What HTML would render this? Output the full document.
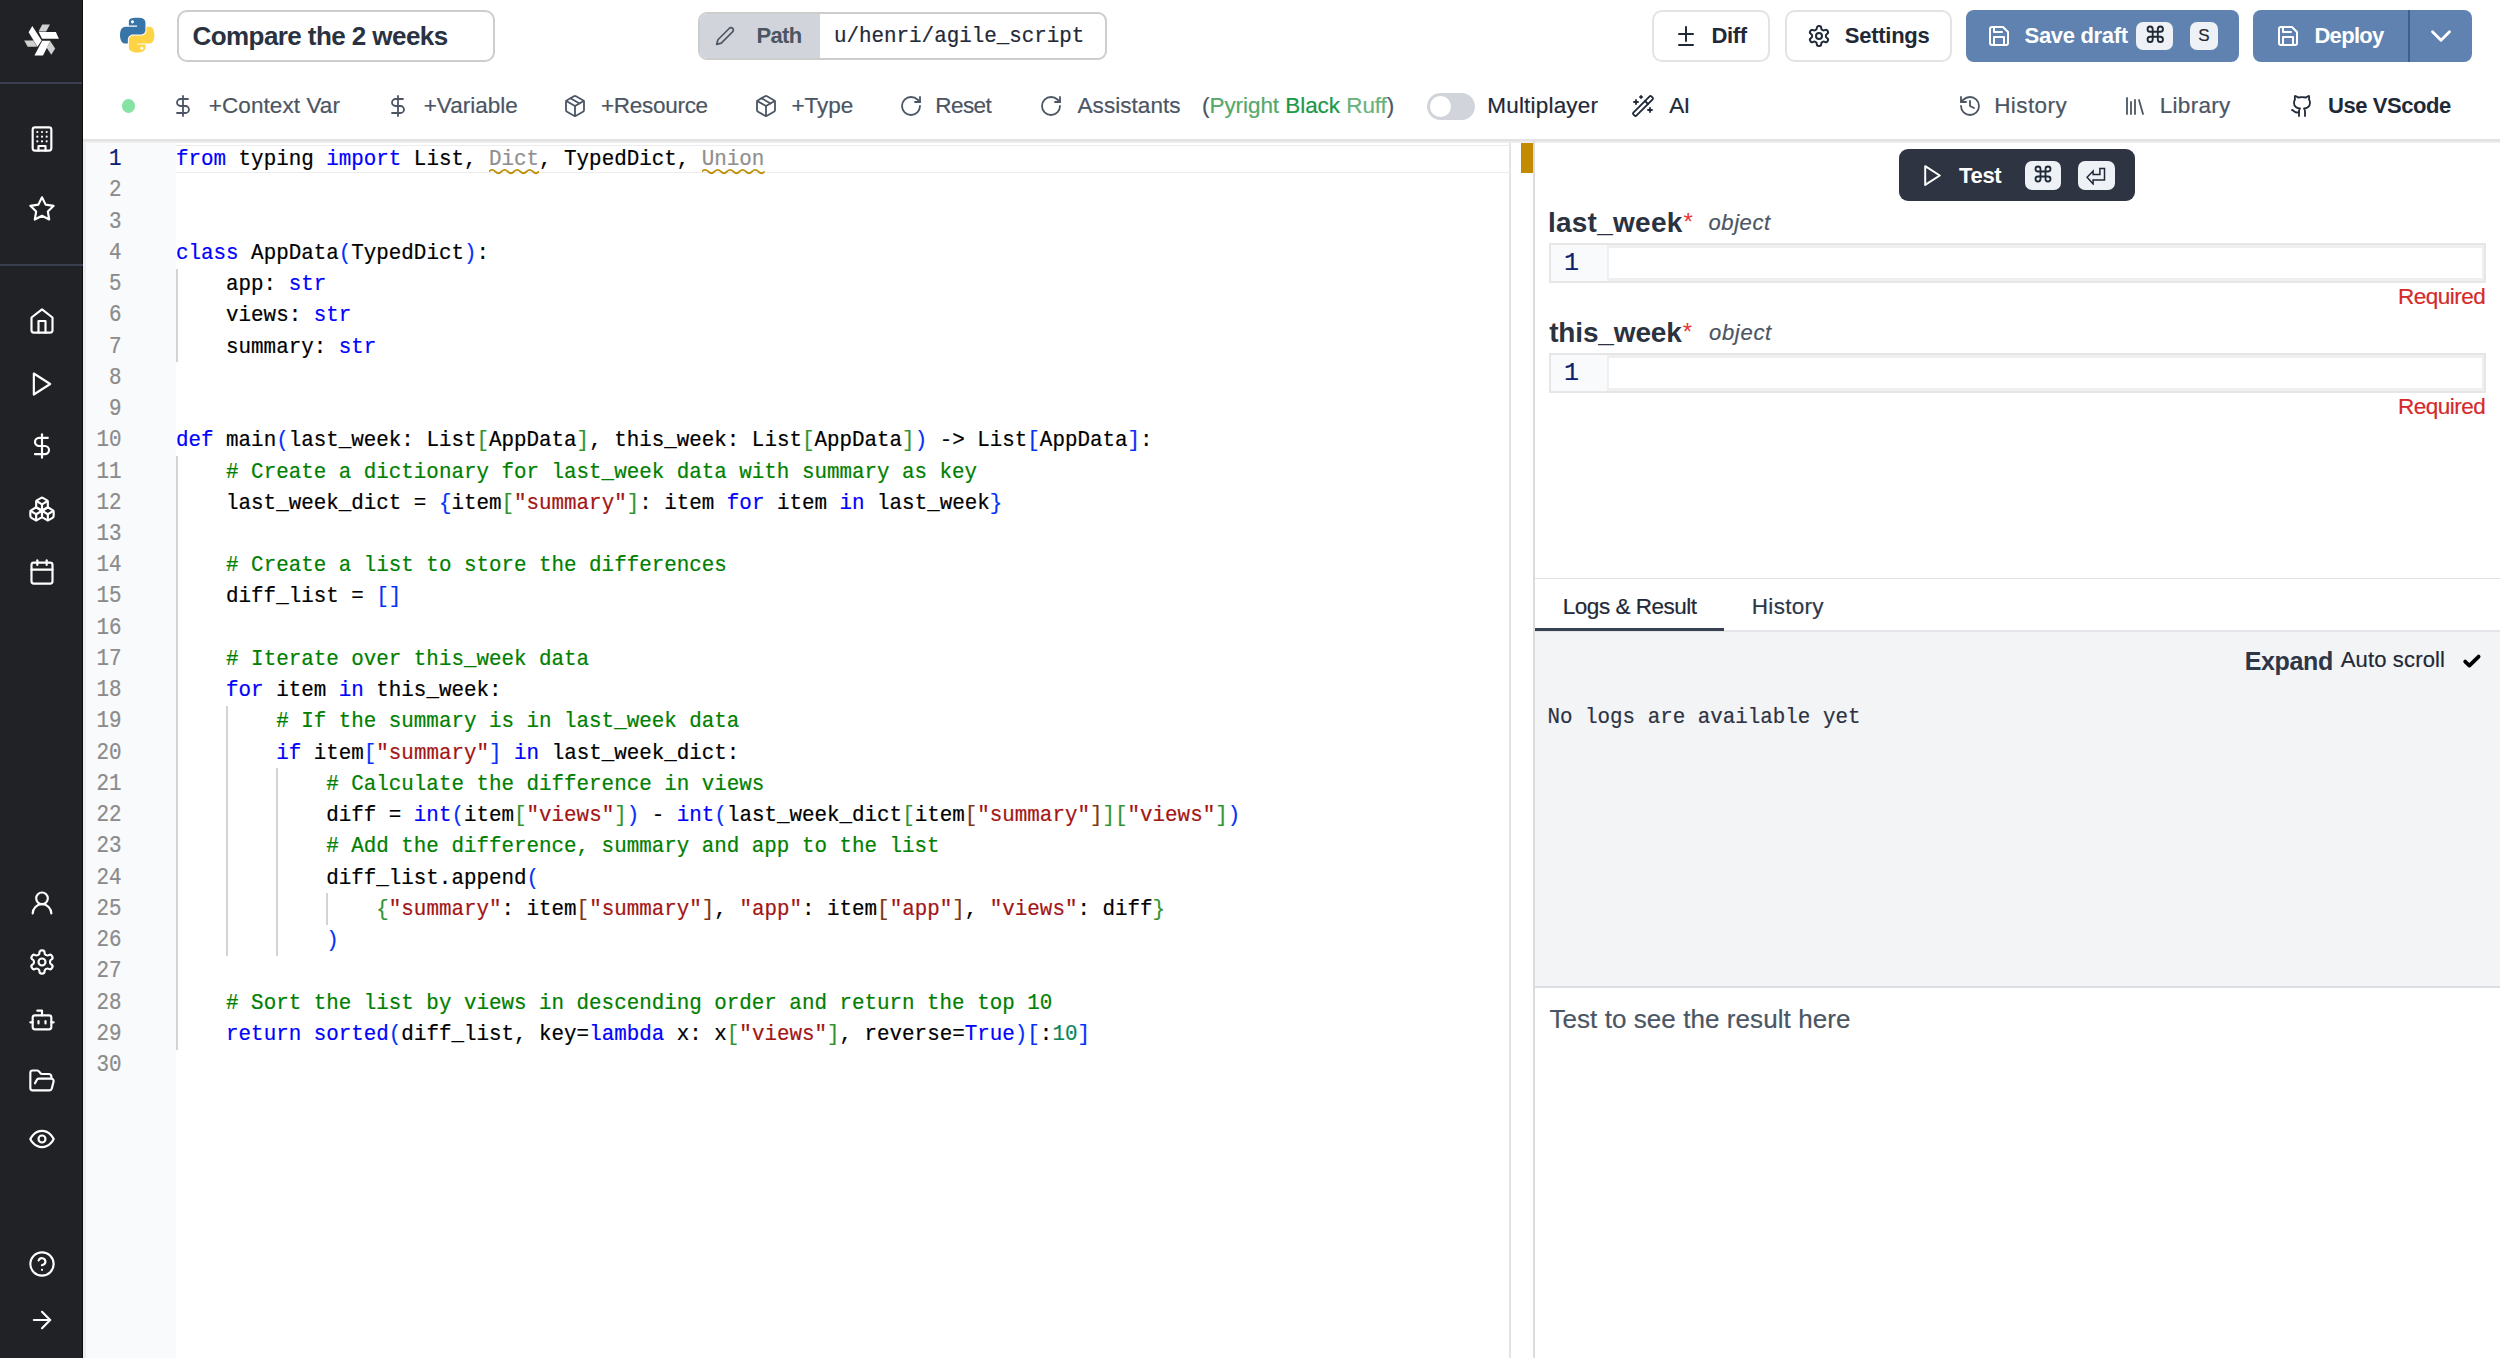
<!DOCTYPE html>
<html><head><meta charset="utf-8">
<style>
html,body{margin:0;padding:0;width:2500px;height:1358px;overflow:hidden;background:#fff;position:relative;font-family:"Liberation Sans",sans-serif;}
.a{position:absolute;}
.t,#code,#nums{-webkit-text-stroke:0.2px currentColor;}
.nb{-webkit-text-stroke:0 !important;}
.t{position:absolute;line-height:0;white-space:nowrap;}
svg.i{position:absolute;fill:none;stroke-linecap:round;stroke-linejoin:round;}
#side{left:0;top:0;width:83px;height:1358px;background:#202226;}
.sdiv{position:absolute;left:0;width:83px;height:2px;background:#3b3e4e;}
#side svg.i{stroke:#fff;stroke-width:1.85;width:28px;height:28px;}

.bx{position:absolute;box-sizing:border-box;}
svg.ti{stroke:#4b5563;stroke-width:1.8;width:24px;height:24px;}
.tb{font-size:22px;color:#4b5563;}
.btn{font-size:21px;font-weight:700;color:#1f2937;}
.kbd{position:absolute;box-sizing:border-box;background:#eef1f5;border-radius:7px;}

#code,#nums{font-family:"Liberation Mono",monospace;font-size:20.87px;line-height:31.24px;color:#000;}
.cl{white-space:pre;height:31.24px;transform:scaleY(1.07);transform-origin:0 21.17px}.ln{height:31.24px;transform:scaleY(1.18);transform-origin:0 21.17px}
#nums .ln{text-align:right;color:#8b8b8b;}
.k{color:#0000ff}.c{color:#008000}.s{color:#a31515}.n{color:#098658}.b1{color:#0431fa}.b2{color:#319331}.b3{color:#7b3814}.u{color:#8f8f8f}
</style></head><body>

<!-- SIDEBAR -->
<div id="side" class="a">
  <svg class="a" style="left:15px;top:15px;width:50px;height:50px" viewBox="0 0 1358 1358">
    <polygon fill="#d0d0d0" points="250,690 500,690 600,862 345,862"/>
    <polygon fill="#fff" points="370,470 470,300 722,690 610,862"/>
    <polygon fill="#d0d0d0" points="740,255 950,255 845,450 640,450"/>
    <polygon fill="#fff" points="645,462 1110,462 1192,642 735,642"/>
    <polygon fill="#d0d0d0" points="862,888 962,712 1092,910 985,1082"/>
    <polygon fill="#fff" points="528,1102 740,700 962,700 760,1102"/>
  </svg>
  <div class="sdiv" style="top:82px"></div>
  <div class="a" style="left:82px;top:0;width:1px;height:1358px;background:#0d0e10"></div>
  <div class="sdiv" style="top:264px"></div>
  <svg class="i" style="left:27.5px;top:125.10px" viewBox="0 0 24 24"><rect width="16" height="20" x="4" y="2" rx="2" ry="2"/><path d="M9 22v-4h6v4"/><path d="M8 6h.01"/><path d="M16 6h.01"/><path d="M12 6h.01"/><path d="M12 10h.01"/><path d="M12 14h.01"/><path d="M16 10h.01"/><path d="M16 14h.01"/><path d="M8 10h.01"/><path d="M8 14h.01"/></svg>
  <svg class="i" style="left:27.5px;top:194.60px" viewBox="0 0 24 24"><polygon points="12 2 15.09 8.26 22 9.27 17 14.14 18.18 21.02 12 17.77 5.82 21.02 7 14.14 2 9.27 8.91 8.26 12 2"/></svg>
  <svg class="i" style="left:27.5px;top:307.05px" viewBox="0 0 24 24"><path d="m3 9 9-7 9 7v11a2 2 0 0 1-2 2H5a2 2 0 0 1-2-2z"/><polyline points="9 22 9 12 15 12 15 22"/></svg>
  <svg class="i" style="left:27.5px;top:370.00px" viewBox="0 0 24 24"><polygon points="5 3 19 12 5 21 5 3"/></svg>
  <svg class="i" style="left:27.5px;top:432.00px" viewBox="0 0 24 24"><line x1="12" x2="12" y1="2" y2="22"/><path d="M17 5H9.5a3.5 3.5 0 0 0 0 7h5a3.5 3.5 0 0 1 0 7H6"/></svg>
  <svg class="i" style="left:27.5px;top:495.00px" viewBox="0 0 24 24"><path d="M2.97 12.92A2 2 0 0 0 2 14.63v3.24a2 2 0 0 0 .97 1.71l3 1.8a2 2 0 0 0 2.06 0L12 19v-5.5l-5-3-4.03 2.42Z"/><path d="m7 16.5-4.74-2.85"/><path d="m7 16.5 5-3"/><path d="M7 16.5v5.17"/><path d="M12 13.5V19l3.97 2.38a2 2 0 0 0 2.06 0l3-1.8a2 2 0 0 0 .97-1.71v-3.24a2 2 0 0 0-.97-1.71L17 10.5l-5 3Z"/><path d="m17 16.5-5-3"/><path d="m17 16.5 4.74-2.85"/><path d="M17 16.5v5.17"/><path d="M7.97 4.42A2 2 0 0 0 7 6.13v4.37l5 3 5-3V6.13a2 2 0 0 0-.97-1.71l-3-1.8a2 2 0 0 0-2.06 0l-3 1.8Z"/><path d="M12 8 7.26 5.15"/><path d="m12 8 4.74-2.85"/><path d="M12 13.5V8"/></svg>
  <svg class="i" style="left:27.5px;top:557.60px" viewBox="0 0 24 24"><rect width="18" height="18" x="3" y="4" rx="2" ry="2"/><line x1="16" x2="16" y1="2" y2="6"/><line x1="8" x2="8" y1="2" y2="6"/><line x1="3" x2="21" y1="10" y2="10"/></svg>
  <svg class="i" style="left:27.5px;top:889.00px" viewBox="0 0 24 24"><circle cx="12" cy="8" r="5"/><path d="M20 21a8 8 0 0 0-16 0"/></svg>
  <svg class="i" style="left:27.5px;top:948.30px" viewBox="0 0 24 24"><path d="M12.22 2h-.44a2 2 0 0 0-2 2v.18a2 2 0 0 1-1 1.73l-.43.25a2 2 0 0 1-2 0l-.15-.08a2 2 0 0 0-2.73.73l-.22.38a2 2 0 0 0 .73 2.73l.15.1a2 2 0 0 1 1 1.72v.51a2 2 0 0 1-1 1.74l-.15.09a2 2 0 0 0-.73 2.73l.22.38a2 2 0 0 0 2.73.73l.15-.08a2 2 0 0 1 2 0l.43.25a2 2 0 0 1 1 1.73V20a2 2 0 0 0 2 2h.44a2 2 0 0 0 2-2v-.18a2 2 0 0 1 1-1.73l.43-.25a2 2 0 0 1 2 0l.15.08a2 2 0 0 0 2.73-.73l.22-.39a2 2 0 0 0-.73-2.73l-.15-.08a2 2 0 0 1-1-1.74v-.5a2 2 0 0 1 1-1.74l.15-.09a2 2 0 0 0 .73-2.73l-.22-.38a2 2 0 0 0-2.73-.73l-.15.08a2 2 0 0 1-2 0l-.43-.25a2 2 0 0 1-1-1.73V4a2 2 0 0 0-2-2z"/><circle cx="12" cy="12" r="3"/></svg>
  <svg class="i" style="left:27.5px;top:1006.40px" viewBox="0 0 24 24"><path d="M12 8V4H8"/><rect width="16" height="12" x="4" y="8" rx="2"/><path d="M2 14h2"/><path d="M20 14h2"/><path d="M15 13v2"/><path d="M9 13v2"/></svg>
  <svg class="i" style="left:27.5px;top:1067.00px" viewBox="0 0 24 24"><path d="m6 14 1.5-2.9A2 2 0 0 1 9.24 10H20a2 2 0 0 1 1.94 2.5l-1.54 6a2 2 0 0 1-1.95 1.5H4a2 2 0 0 1-2-2V5a2 2 0 0 1 2-2h3.9a2 2 0 0 1 1.69.9l.81 1.2a2 2 0 0 0 1.67.9H18a2 2 0 0 1 2 2v2"/></svg>
  <svg class="i" style="left:27.5px;top:1125.20px" viewBox="0 0 24 24"><path d="M2 12s3-7 10-7 10 7 10 7-3 7-10 7-10-7-10-7Z"/><circle cx="12" cy="12" r="3"/></svg>
  <svg class="i" style="left:27.5px;top:1250.00px" viewBox="0 0 24 24"><circle cx="12" cy="12" r="10"/><path d="M9.09 9a3 3 0 0 1 5.83 1c0 2-3 3-3 3"/><path d="M12 17h.01"/></svg>
  <svg class="i" style="left:27.5px;top:1306.00px" viewBox="0 0 24 24"><path d="M5 12h14"/><path d="m12 5 7 7-7 7"/></svg>
</div>


<!-- HEADER -->
<svg class="a" style="left:119px;top:17px;width:36px;height:36px" viewBox="0 0 110 110">
  <path fill="#3775a9" d="M54.9 2.2c-4.3 0-8.5.4-12.1 1-10.7 1.9-12.7 5.9-12.7 13.3v9.7h25.3v3.3H20.6c-7.4 0-13.8 4.4-15.8 12.8-2.3 9.6-2.4 15.6 0 25.6 1.8 7.5 6.1 12.8 13.5 12.8h8.7V69c0-8.4 7.2-15.8 15.8-15.8h25.3c7 0 12.7-5.8 12.7-12.8V16.4c0-6.8-5.8-11.9-12.7-13.1-4.3-.7-8.8-1.1-13.2-1.1zM41.2 10c2.6 0 4.8 2.2 4.8 4.8 0 2.6-2.1 4.8-4.8 4.8-2.6 0-4.8-2.1-4.8-4.8 0-2.6 2.1-4.8 4.8-4.8z"/>
  <path fill="#ffd343" d="M83.9 29.5v11.3c0 8.8-7.4 16.1-15.8 16.1H42.8c-6.9 0-12.7 5.9-12.7 12.8v24.1c0 6.9 6 10.9 12.7 12.9 8 2.4 15.7 2.8 25.3 0 6.4-1.8 12.7-5.5 12.7-12.9v-9.7H55.5v-3.2h38c7.4 0 10.1-5.1 12.7-12.8 2.7-7.9 2.5-15.5 0-25.6-1.8-7.3-5.3-12.8-12.7-12.8h-9.6zM69.7 90.6c2.6 0 4.8 2.1 4.8 4.8 0 2.6-2.1 4.8-4.8 4.8-2.6 0-4.8-2.2-4.8-4.8.1-2.7 2.2-4.8 4.8-4.8z"/>
</svg>
<div class="bx" style="left:177px;top:10px;width:318px;height:51.5px;border:2px solid #cdcdcd;border-radius:10px;"></div>
<div id="title" class="nb t" style="left:192.5px;top:35.5px;font-size:26px;font-weight:700;letter-spacing:-0.57px;color:#2a3242;">Compare the 2 weeks</div>

<div class="bx" style="left:698px;top:11.5px;width:408.5px;height:48.5px;border:2px solid #cdcdcd;border-radius:9px;overflow:hidden;"><div class="a" style="left:0;top:0;width:120px;height:100%;background:#d1d5db;"></div></div>
<svg class="i" style="left:715px;top:25.7px;width:20px;height:20px;stroke:#4b5563;stroke-width:2" viewBox="0 0 24 24"><path d="M17 3a2.85 2.83 0 1 1 4 4L7.5 20.5 2 22l1.5-5.5Z"/></svg>
<div id="path" class="nb t" style="left:756.5px;top:35.8px;font-size:22px;font-weight:700;letter-spacing:-0.7px;color:#4b5563;">Path</div>
<div id="pathtxt" class="t" style="left:834px;top:37.2px;transform:scaleY(1.08);transform-origin:0 5.55px;font-size:20.87px;font-family:'Liberation Mono',monospace;color:#1f2937;">u/henri/agile_script</div>

<div class="bx" style="left:1651.5px;top:10px;width:118.5px;height:51.5px;border:2px solid #e3e3e3;border-radius:10px;"></div>
<svg class="i" style="left:1673.8px;top:23.8px;width:24px;height:24px;stroke:#1f2937;stroke-width:2" viewBox="0 0 24 24"><path d="M12 3v14"/><path d="M5 10h14"/><path d="M5 21h14"/></svg>
<div id="diff" class="nb t btn" style="left:1711.6px;top:35.8px;font-size:22px;font-weight:700;letter-spacing:-0.37px;">Diff</div>
<div class="bx" style="left:1785px;top:10px;width:166.5px;height:51.5px;border:2px solid #e3e3e3;border-radius:10px;"></div>
<svg class="i" style="left:1807.2px;top:23.7px;width:24px;height:24px;stroke:#1f2937;stroke-width:2" viewBox="0 0 24 24"><path d="M12.22 2h-.44a2 2 0 0 0-2 2v.18a2 2 0 0 1-1 1.73l-.43.25a2 2 0 0 1-2 0l-.15-.08a2 2 0 0 0-2.73.73l-.22.38a2 2 0 0 0 .73 2.73l.15.1a2 2 0 0 1 1 1.72v.51a2 2 0 0 1-1 1.74l-.15.09a2 2 0 0 0-.73 2.73l.22.38a2 2 0 0 0 2.73.73l.15-.08a2 2 0 0 1 2 0l.43.25a2 2 0 0 1 1 1.73V20a2 2 0 0 0 2 2h.44a2 2 0 0 0 2-2v-.18a2 2 0 0 1 1-1.73l.43-.25a2 2 0 0 1 2 0l.15.08a2 2 0 0 0 2.73-.73l.22-.39a2 2 0 0 0-.73-2.73l-.15-.08a2 2 0 0 1-1-1.74v-.5a2 2 0 0 1 1-1.74l.15-.09a2 2 0 0 0 .73-2.73l-.22-.38a2 2 0 0 0-2.73-.73l-.15.08a2 2 0 0 1-2 0l-.43-.25a2 2 0 0 1-1-1.73V4a2 2 0 0 0-2-2z"/><circle cx="12" cy="12" r="3"/></svg>
<div id="settings" class="nb t btn" style="left:1844.8px;top:35.8px;font-size:22px;font-weight:700;letter-spacing:-0.26px;">Settings</div>

<div class="bx" style="left:1966px;top:10px;width:273px;height:52px;background:#5f82b0;border-radius:8px;"></div>
<svg class="i" style="left:1987px;top:23.9px;width:24px;height:24px;stroke:#fff;stroke-width:2" viewBox="0 0 24 24"><path d="M19 21H5a2 2 0 0 1-2-2V5a2 2 0 0 1 2-2h11l5 5v11a2 2 0 0 1-2 2z"/><polyline points="17 21 17 13 7 13 7 21"/><polyline points="7 3 7 8 15 8"/></svg>
<div id="save" class="nb t btn" style="left:2024.6px;top:36.0px;font-size:22px;font-weight:700;letter-spacing:-0.33px;color:#fff;">Save draft</div>
<div class="kbd" style="left:2136px;top:22px;width:36.5px;height:28px;"></div>
<svg class="i" style="left:2144.6px;top:23.6px;width:20.5px;height:20.5px;stroke:#1f2937;stroke-width:2.2" viewBox="0 0 24 24"><path d="M15 6v12a3 3 0 1 0 3-3H6a3 3 0 1 0 3 3V6a3 3 0 1 0-3 3h12a3 3 0 1 0-3-3"/></svg>
<div class="kbd" style="left:2190px;top:22px;width:28px;height:28px;"></div>
<div id="kbds" class="t" style="left:2198.3px;top:36.2px;font-size:17px;color:#1f2937;">S</div>

<div class="bx" style="left:2253px;top:10px;width:219px;height:51.6px;background:#5f82b0;border-radius:8px;"></div>
<div class="a" style="left:2407.5px;top:10px;width:2px;height:51.6px;background:#3f5f90;"></div>
<svg class="i" style="left:2276.1px;top:23.5px;width:24px;height:24px;stroke:#fff;stroke-width:2" viewBox="0 0 24 24"><path d="M19 21H5a2 2 0 0 1-2-2V5a2 2 0 0 1 2-2h11l5 5v11a2 2 0 0 1-2 2z"/><polyline points="17 21 17 13 7 13 7 21"/><polyline points="7 3 7 8 15 8"/></svg>
<div id="deploy" class="nb t btn" style="left:2314.4px;top:35.8px;font-size:22px;font-weight:700;letter-spacing:-0.68px;color:#fff;">Deploy</div>
<svg class="i" style="left:2423.9px;top:18.8px;width:34px;height:34px;stroke:#fff;stroke-width:2" viewBox="0 0 24 24"><path d="m6 9 6 6 6-6"/></svg>

<!-- TOOLBAR -->
<div class="a" style="left:121.7px;top:99.3px;width:13.6px;height:13.6px;border-radius:50%;background:#86e3a4;"></div>
<svg class="i ti" style="left:170.5px;top:94.2px" viewBox="0 0 24 24"><line x1="12" x2="12" y1="2" y2="22"/><path d="M17 5H9.5a3.5 3.5 0 0 0 0 7h5a3.5 3.5 0 0 1 0 7H6"/></svg>
<div id="ctx" class="t tb" style="left:208.8px;top:106.1px;font-size:22.5px;font-weight:400;letter-spacing:0.08px;">+Context Var</div>
<svg class="i ti" style="left:385.7px;top:94.2px" viewBox="0 0 24 24"><line x1="12" x2="12" y1="2" y2="22"/><path d="M17 5H9.5a3.5 3.5 0 0 0 0 7h5a3.5 3.5 0 0 1 0 7H6"/></svg>
<div id="var" class="t tb" style="left:423.7px;top:106.0px;font-size:22.5px;font-weight:400;letter-spacing:0.0px;">+Variable</div>
<svg class="i ti" style="left:562.7px;top:94.2px" viewBox="0 0 24 24"><path d="m7.5 4.27 9 5.15"/><path d="M21 8a2 2 0 0 0-1-1.73l-7-4a2 2 0 0 0-2 0l-7 4A2 2 0 0 0 3 8v8a2 2 0 0 0 1 1.73l7 4a2 2 0 0 0 2 0l7-4A2 2 0 0 0 21 16Z"/><path d="m3.3 7 8.7 5 8.7-5"/><path d="M12 22V12"/></svg>
<div id="res" class="t tb" style="left:601.0px;top:106.0px;font-size:22.5px;font-weight:400;letter-spacing:-0.29px;">+Resource</div>
<svg class="i ti" style="left:753.5px;top:94.2px" viewBox="0 0 24 24"><path d="m7.5 4.27 9 5.15"/><path d="M21 8a2 2 0 0 0-1-1.73l-7-4a2 2 0 0 0-2 0l-7 4A2 2 0 0 0 3 8v8a2 2 0 0 0 1 1.73l7 4a2 2 0 0 0 2 0l7-4A2 2 0 0 0 21 16Z"/><path d="m3.3 7 8.7 5 8.7-5"/><path d="M12 22V12"/></svg>
<div id="type" class="t tb" style="left:791.5px;top:106.0px;font-size:22.5px;font-weight:400;letter-spacing:-0.05px;">+Type</div>
<svg class="i ti" style="left:898.9px;top:94.2px" viewBox="0 0 24 24"><path d="M21 12a9 9 0 1 1-9-9c2.52 0 4.93 1 6.74 2.74L21 8"/><path d="M21 3v5h-5"/></svg>
<div id="reset" class="t tb" style="left:935.3px;top:106.0px;font-size:22.5px;font-weight:400;letter-spacing:-0.57px;">Reset</div>
<svg class="i ti" style="left:1038.5px;top:94.2px" viewBox="0 0 24 24"><path d="M21 12a9 9 0 1 1-9-9c2.52 0 4.93 1 6.74 2.74L21 8"/><path d="M21 3v5h-5"/></svg>
<div id="assist" class="t tb" style="left:1077.5px;top:106.0px;font-size:22.5px;font-weight:400;letter-spacing:0.06px;">Assistants</div>
<div id="pyr" class="t tb" style="left:1202.0px;top:106.0px;font-size:22.5px;font-weight:400;letter-spacing:-0.06px;"><span>(</span><span style="color:#55a86a">Pyright</span> <span style="color:#1a9848">Black</span> <span style="color:#6ab27b">Ruff</span><span>)</span></div>
<div class="a" style="left:1426.5px;top:93.2px;width:48.5px;height:27.3px;border-radius:14px;background:#d1d5db;"></div>
<div class="a" style="left:1429.5px;top:96.2px;width:21.3px;height:21.3px;border-radius:50%;background:#fff;"></div>
<div id="multi" class="t tb" style="left:1487.3px;top:106.0px;font-size:22.5px;font-weight:400;letter-spacing:0.19px;color:#1f2937;">Multiplayer</div>
<svg class="i ti" style="left:1630.5px;top:94.2px;stroke:#1f2937" viewBox="0 0 24 24"><path d="m21.64 3.64-1.28-1.28a1.21 1.21 0 0 0-1.72 0L2.36 18.64a1.21 1.21 0 0 0 0 1.72l1.28 1.28a1.2 1.2 0 0 0 1.72 0L21.64 5.36a1.2 1.2 0 0 0 0-1.72Z"/><path d="m14 7 3 3"/><path d="M5 6v4"/><path d="M19 14v4"/><path d="M10 2v2"/><path d="M7 8H3"/><path d="M21 16h-4"/><path d="M11 3H9"/></svg>
<div id="ai" class="t tb" style="left:1669.3px;top:106.0px;font-size:22.5px;font-weight:400;letter-spacing:-0.6px;color:#1f2937;">AI</div>
<svg class="i ti" style="left:1957.5px;top:94.2px" viewBox="0 0 24 24"><path d="M3 12a9 9 0 1 0 9-9 9.75 9.75 0 0 0-6.74 2.74L3 8"/><path d="M3 3v5h5"/><path d="M12 7v5l4 2"/></svg>
<div id="hist" class="t tb" style="left:1994.2px;top:106.0px;font-size:22.5px;font-weight:400;letter-spacing:0.42px;">History</div>
<svg class="i ti" style="left:2123px;top:94.2px" viewBox="0 0 24 24"><path d="m16 6 4 14"/><path d="M12 6v14"/><path d="M8 8v12"/><path d="M4 4v16"/></svg>
<div id="lib" class="t tb" style="left:2159.8px;top:106.0px;font-size:22.5px;font-weight:400;letter-spacing:0.28px;">Library</div>
<svg class="i ti" style="left:2290.3px;top:94.2px;stroke:#1f2937" viewBox="0 0 24 24"><path d="M15 22v-4a4.8 4.8 0 0 0-1-3.5c3 0 6-2 6-5.5.08-1.25-.27-2.48-1-3.5.28-1.15.28-2.35 0-3.5 0 0-1 0-3 1.5-2.64-.5-5.36-.5-8 0C6 2 5 2 5 2c-.3 1.15-.3 2.35 0 3.5A5.403 5.403 0 0 0 4 9c0 3.5 3 5.5 6 5.5-.39.49-.68 1.05-.85 1.65-.17.6-.22 1.23-.15 1.85v4"/><path d="M9 18c-4.51 2-5-2-7-2"/></svg>
<div id="vscode" class="nb t btn" style="left:2328.0px;top:106.0px;font-size:22px;font-weight:700;letter-spacing:-0.44px;">Use VScode</div>
<div class="a" style="left:83px;top:138.5px;width:2417px;height:1.5px;background:#e5e7eb;"></div>

<!-- EDITOR -->
<div class="a" style="left:83px;top:140px;width:2.5px;height:1218px;background:#eceef0"></div>
<div class="a" style="left:85.5px;top:140px;width:90.5px;height:1218px;background:#f9fafb"></div>
<div class="a" style="left:83px;top:139px;width:2417px;height:4px;background:linear-gradient(#e3e3e3,#e3e3e3 45%,#f4f4f4)"></div>
<div class="bx" style="left:176px;top:145px;width:1333px;height:28.2px;border-top:1.8px solid #ececec;border-bottom:1.8px solid #ececec"></div>
<div class="a" style="left:176.0px;top:268.6px;width:1.5px;height:93.7px;background:#d4d4d4"></div><div class="a" style="left:176.0px;top:456.0px;width:1.5px;height:593.6px;background:#d4d4d4"></div><div class="a" style="left:226.1px;top:705.9px;width:1.5px;height:249.9px;background:#d4d4d4"></div><div class="a" style="left:276.2px;top:768.4px;width:1.5px;height:187.4px;background:#d4d4d4"></div><div class="a" style="left:326.3px;top:893.4px;width:1.5px;height:31.2px;background:#d4d4d4"></div>
<div class="a" id="nums" style="left:81.5px;top:144.2px;width:40px;">
<div class="ln" style="color:#0b216f">1</div>
<div class="ln">2</div>
<div class="ln">3</div>
<div class="ln">4</div>
<div class="ln">5</div>
<div class="ln">6</div>
<div class="ln">7</div>
<div class="ln">8</div>
<div class="ln">9</div>
<div class="ln">10</div>
<div class="ln">11</div>
<div class="ln">12</div>
<div class="ln">13</div>
<div class="ln">14</div>
<div class="ln">15</div>
<div class="ln">16</div>
<div class="ln">17</div>
<div class="ln">18</div>
<div class="ln">19</div>
<div class="ln">20</div>
<div class="ln">21</div>
<div class="ln">22</div>
<div class="ln">23</div>
<div class="ln">24</div>
<div class="ln">25</div>
<div class="ln">26</div>
<div class="ln">27</div>
<div class="ln">28</div>
<div class="ln">29</div>
<div class="ln">30</div>
</div>
<div class="a" id="code" style="left:176px;top:144.2px;">
<div class="cl"><span class="k">from</span> typing <span class="k">import</span> List, <span class="u">Dict</span>, TypedDict, <span class="u">Union</span></div>
<div class="cl"></div>
<div class="cl"></div>
<div class="cl"><span class="k">class</span> AppData<span class="b1">(</span>TypedDict<span class="b1">)</span>:</div>
<div class="cl">    app: <span class="k">str</span></div>
<div class="cl">    views: <span class="k">str</span></div>
<div class="cl">    summary: <span class="k">str</span></div>
<div class="cl"></div>
<div class="cl"></div>
<div class="cl"><span class="k">def</span> main<span class="b1">(</span>last_week: List<span class="b2">[</span>AppData<span class="b2">]</span>, this_week: List<span class="b2">[</span>AppData<span class="b2">]</span><span class="b1">)</span> -&gt; List<span class="b1">[</span>AppData<span class="b1">]</span>:</div>
<div class="cl">    <span class="c"># Create a dictionary for last_week data with summary as key</span></div>
<div class="cl">    last_week_dict = <span class="b1">{</span>item<span class="b2">[</span><span class="s">&quot;summary&quot;</span><span class="b2">]</span>: item <span class="k">for</span> item <span class="k">in</span> last_week<span class="b1">}</span></div>
<div class="cl"></div>
<div class="cl">    <span class="c"># Create a list to store the differences</span></div>
<div class="cl">    diff_list = <span class="b1">[]</span></div>
<div class="cl"></div>
<div class="cl">    <span class="c"># Iterate over this_week data</span></div>
<div class="cl">    <span class="k">for</span> item <span class="k">in</span> this_week:</div>
<div class="cl">        <span class="c"># If the summary is in last_week data</span></div>
<div class="cl">        <span class="k">if</span> item<span class="b1">[</span><span class="s">&quot;summary&quot;</span><span class="b1">]</span> <span class="k">in</span> last_week_dict:</div>
<div class="cl">            <span class="c"># Calculate the difference in views</span></div>
<div class="cl">            diff = <span class="k">int</span><span class="b1">(</span>item<span class="b2">[</span><span class="s">&quot;views&quot;</span><span class="b2">]</span><span class="b1">)</span> - <span class="k">int</span><span class="b1">(</span>last_week_dict<span class="b2">[</span>item<span class="b3">[</span><span class="s">&quot;summary&quot;</span><span class="b3">]</span><span class="b2">]</span><span class="b2">[</span><span class="s">&quot;views&quot;</span><span class="b2">]</span><span class="b1">)</span></div>
<div class="cl">            <span class="c"># Add the difference, summary and app to the list</span></div>
<div class="cl">            diff_list.append<span class="b1">(</span></div>
<div class="cl">                <span class="b2">{</span><span class="s">&quot;summary&quot;</span>: item<span class="b3">[</span><span class="s">&quot;summary&quot;</span><span class="b3">]</span>, <span class="s">&quot;app&quot;</span>: item<span class="b3">[</span><span class="s">&quot;app&quot;</span><span class="b3">]</span>, <span class="s">&quot;views&quot;</span>: diff<span class="b2">}</span></div>
<div class="cl">            <span class="b1">)</span></div>
<div class="cl"></div>
<div class="cl">    <span class="c"># Sort the list by views in descending order and return the top 10</span></div>
<div class="cl">    <span class="k">return</span> <span class="k">sorted</span><span class="b1">(</span>diff_list, key=<span class="k">lambda</span> x: x<span class="b2">[</span><span class="s">&quot;views&quot;</span><span class="b2">]</span>, reverse=<span class="k">True</span><span class="b1">)</span><span class="b1">[</span>:<span class="n">10</span><span class="b1">]</span></div>
<div class="cl"></div>
</div>
<svg class="a" style="left:489.1px;top:168px;width:50.1px;height:7px" viewBox="0 0 50.4 6.2" preserveAspectRatio="none"><path d="M0 3.1 C2.27 1 4.03 1 6.30 3.1 S10.33 5.4 12.60 3.1 C14.87 1 16.63 1 18.90 3.1 S22.93 5.4 25.20 3.1 C27.47 1 29.23 1 31.50 3.1 S35.53 5.4 37.80 3.1 C40.07 1 41.83 1 44.10 3.1 S48.13 5.4 50.40 3.1" fill="none" stroke="#c0900a" stroke-width="1.6"/></svg><svg class="a" style="left:702.0px;top:168px;width:62.6px;height:7px" viewBox="0 0 63.0 6.2" preserveAspectRatio="none"><path d="M0 3.1 C2.27 1 4.03 1 6.30 3.1 S10.33 5.4 12.60 3.1 C14.87 1 16.63 1 18.90 3.1 S22.93 5.4 25.20 3.1 C27.47 1 29.23 1 31.50 3.1 S35.53 5.4 37.80 3.1 C40.07 1 41.83 1 44.10 3.1 S48.13 5.4 50.40 3.1 C52.67 1 54.43 1 56.70 3.1 S60.73 5.4 63.00 3.1" fill="none" stroke="#c0900a" stroke-width="1.6"/></svg>
<div class="a" style="left:1509px;top:143px;width:1.5px;height:1215px;background:#e4e4e4"></div>
<div class="a" style="left:1521px;top:143px;width:12px;height:30px;background:#c18a00"></div>
<div class="a" style="left:1533px;top:140px;width:1.5px;height:1218px;background:#dcdcdc"></div>

<!-- RIGHT PANEL -->
<div class="bx" style="left:1899.4px;top:149.4px;width:235.5px;height:51.8px;background:#2e3441;border-radius:9px;"></div>
<svg class="i" style="left:1920px;top:163px;width:25px;height:25px;stroke:#fff;stroke-width:1.9" viewBox="0 0 24 24"><polygon points="5 3 19 12 5 21 5 3"/></svg>
<div id="test" class="nb t" style="left:1959.0px;top:175.6px;font-size:22px;font-weight:700;letter-spacing:-0.33px;color:#fff;">Test</div>
<div class="kbd" style="left:2025px;top:161.3px;width:36px;height:28.5px;"></div>
<svg class="i" style="left:2032.7px;top:163.7px;width:20px;height:20px;stroke:#1f2937;stroke-width:2.2" viewBox="0 0 24 24"><path d="M15 6v12a3 3 0 1 0 3-3H6a3 3 0 1 0 3 3V6a3 3 0 1 0-3 3h12a3 3 0 1 0-3-3"/></svg>
<div class="kbd" style="left:2078px;top:161.3px;width:36.8px;height:28.5px;"></div>
<svg class="a" style="left:2084px;top:167px;width:24px;height:18px" viewBox="0 0 24 18"><path d="M15.9 1.5 H20.5 V13.1 H9.1 V16.9 L3.1 10.3 L9.1 4.1 V7.5 H15.9 Z" fill="none" stroke="#1f2937" stroke-width="1.5" stroke-linejoin="miter"/></svg>

<div id="arg_last_week" class="nb t" style="left:1547.9px;top:222.7px;font-size:28px;font-weight:700;letter-spacing:0.26px;color:#2b3240;">last_week<span style="color:#e53935;font-weight:400;font-size:24px;position:relative;top:-2px;margin-left:1px">*</span></div>
<div id="obj0" class="t" style="left:1708.5px;top:222.6px;font-size:22px;font-weight:400;letter-spacing:0.58px;font-style:italic;color:#4b5563;">object</div>
<div class="bx" style="left:1548.5px;top:243px;width:937.5px;height:40px;border:2px solid #e6e6e6;"></div>
<div class="a" style="left:1550.5px;top:245px;width:56px;height:36px;background:#f9fafb;"></div>
<div class="bx" style="left:1606.5px;top:245px;width:877.5px;height:36px;border:3px solid #efefef;border-left-width:2px;border-right-width:2px"></div>
<div class="t" style="left:1564px;top:264.3px;font-size:25px;font-family:'Liberation Mono',monospace;color:#0b216f;">1</div>
<div id="req0" class="t" style="left:2397.9px;top:296.9px;font-size:22.5px;font-weight:400;letter-spacing:-0.5px;color:#d42a2a;">Required</div>


<div id="arg_this_week" class="nb t" style="left:1549.2px;top:332.7px;font-size:28px;font-weight:700;letter-spacing:-0.15px;color:#2b3240;">this_week<span style="color:#e53935;font-weight:400;font-size:24px;position:relative;top:-2px;margin-left:1px">*</span></div>
<div id="obj1" class="t" style="left:1709.0px;top:332.6px;font-size:22px;font-weight:400;letter-spacing:0.7px;font-style:italic;color:#4b5563;">object</div>
<div class="bx" style="left:1548.5px;top:353px;width:937.5px;height:40px;border:2px solid #e6e6e6;"></div>
<div class="a" style="left:1550.5px;top:355px;width:56px;height:36px;background:#f9fafb;"></div>
<div class="bx" style="left:1606.5px;top:355px;width:877.5px;height:36px;border:3px solid #efefef;border-left-width:2px;border-right-width:2px"></div>
<div class="t" style="left:1564px;top:374.3px;font-size:25px;font-family:'Liberation Mono',monospace;color:#0b216f;">1</div>
<div id="req1" class="t" style="left:2397.9px;top:406.9px;font-size:22.5px;font-weight:400;letter-spacing:-0.5px;color:#d42a2a;">Required</div>

<div class="a" style="left:1535px;top:577.5px;width:965px;height:1.5px;background:#dfe1e4;"></div>
<div id="logs" class="t" style="left:1562.8px;top:607.0px;font-size:22.5px;font-weight:400;letter-spacing:-0.48px;color:#1f2937;">Logs &amp; Result</div>
<div id="histtab" class="t" style="left:1751.8px;top:606.9px;font-size:22.5px;font-weight:400;letter-spacing:0.3px;color:#2d3748;">History</div>
<div class="a" style="left:1535px;top:631px;width:965px;height:356px;background:#f3f4f6;"></div>
<div class="a" style="left:1535px;top:630px;width:965px;height:1.5px;background:#e3e5e8;"></div>
<div class="a" style="left:1535px;top:627.6px;width:188.5px;height:3.2px;background:#374151;"></div>
<div id="expand" class="nb t" style="left:2244.7px;top:660.6px;font-size:25px;font-weight:700;letter-spacing:-0.34px;color:#2d3748;">Expand</div>
<div id="auto" class="t" style="left:2340.7px;top:660.4px;font-size:22px;font-weight:400;letter-spacing:0.16px;color:#1f2937;">Auto scroll</div>
<svg class="a" style="left:2462px;top:653px;width:20px;height:16px" viewBox="0 0 20 16"><path d="M3.2 8.6 L7.4 12.6 L16.6 3.6" fill="none" stroke="#000" stroke-width="3.8" stroke-linecap="round" stroke-linejoin="round"/></svg>
<div id="nologs" class="t" style="left:1547.5px;top:718px;transform:scaleY(1.1);transform-origin:0 5.55px;font-size:20.87px;font-family:'Liberation Mono',monospace;color:#2d3342;white-space:pre">No logs are available yet</div>
<div class="a" style="left:1535px;top:986px;width:965px;height:2px;background:#dcdee1;"></div>
<div id="result" class="t" style="left:1549.4px;top:1019.0px;font-size:26px;font-weight:400;letter-spacing:0.07px;color:#4b5563;">Test to see the result here</div>

</body></html>
